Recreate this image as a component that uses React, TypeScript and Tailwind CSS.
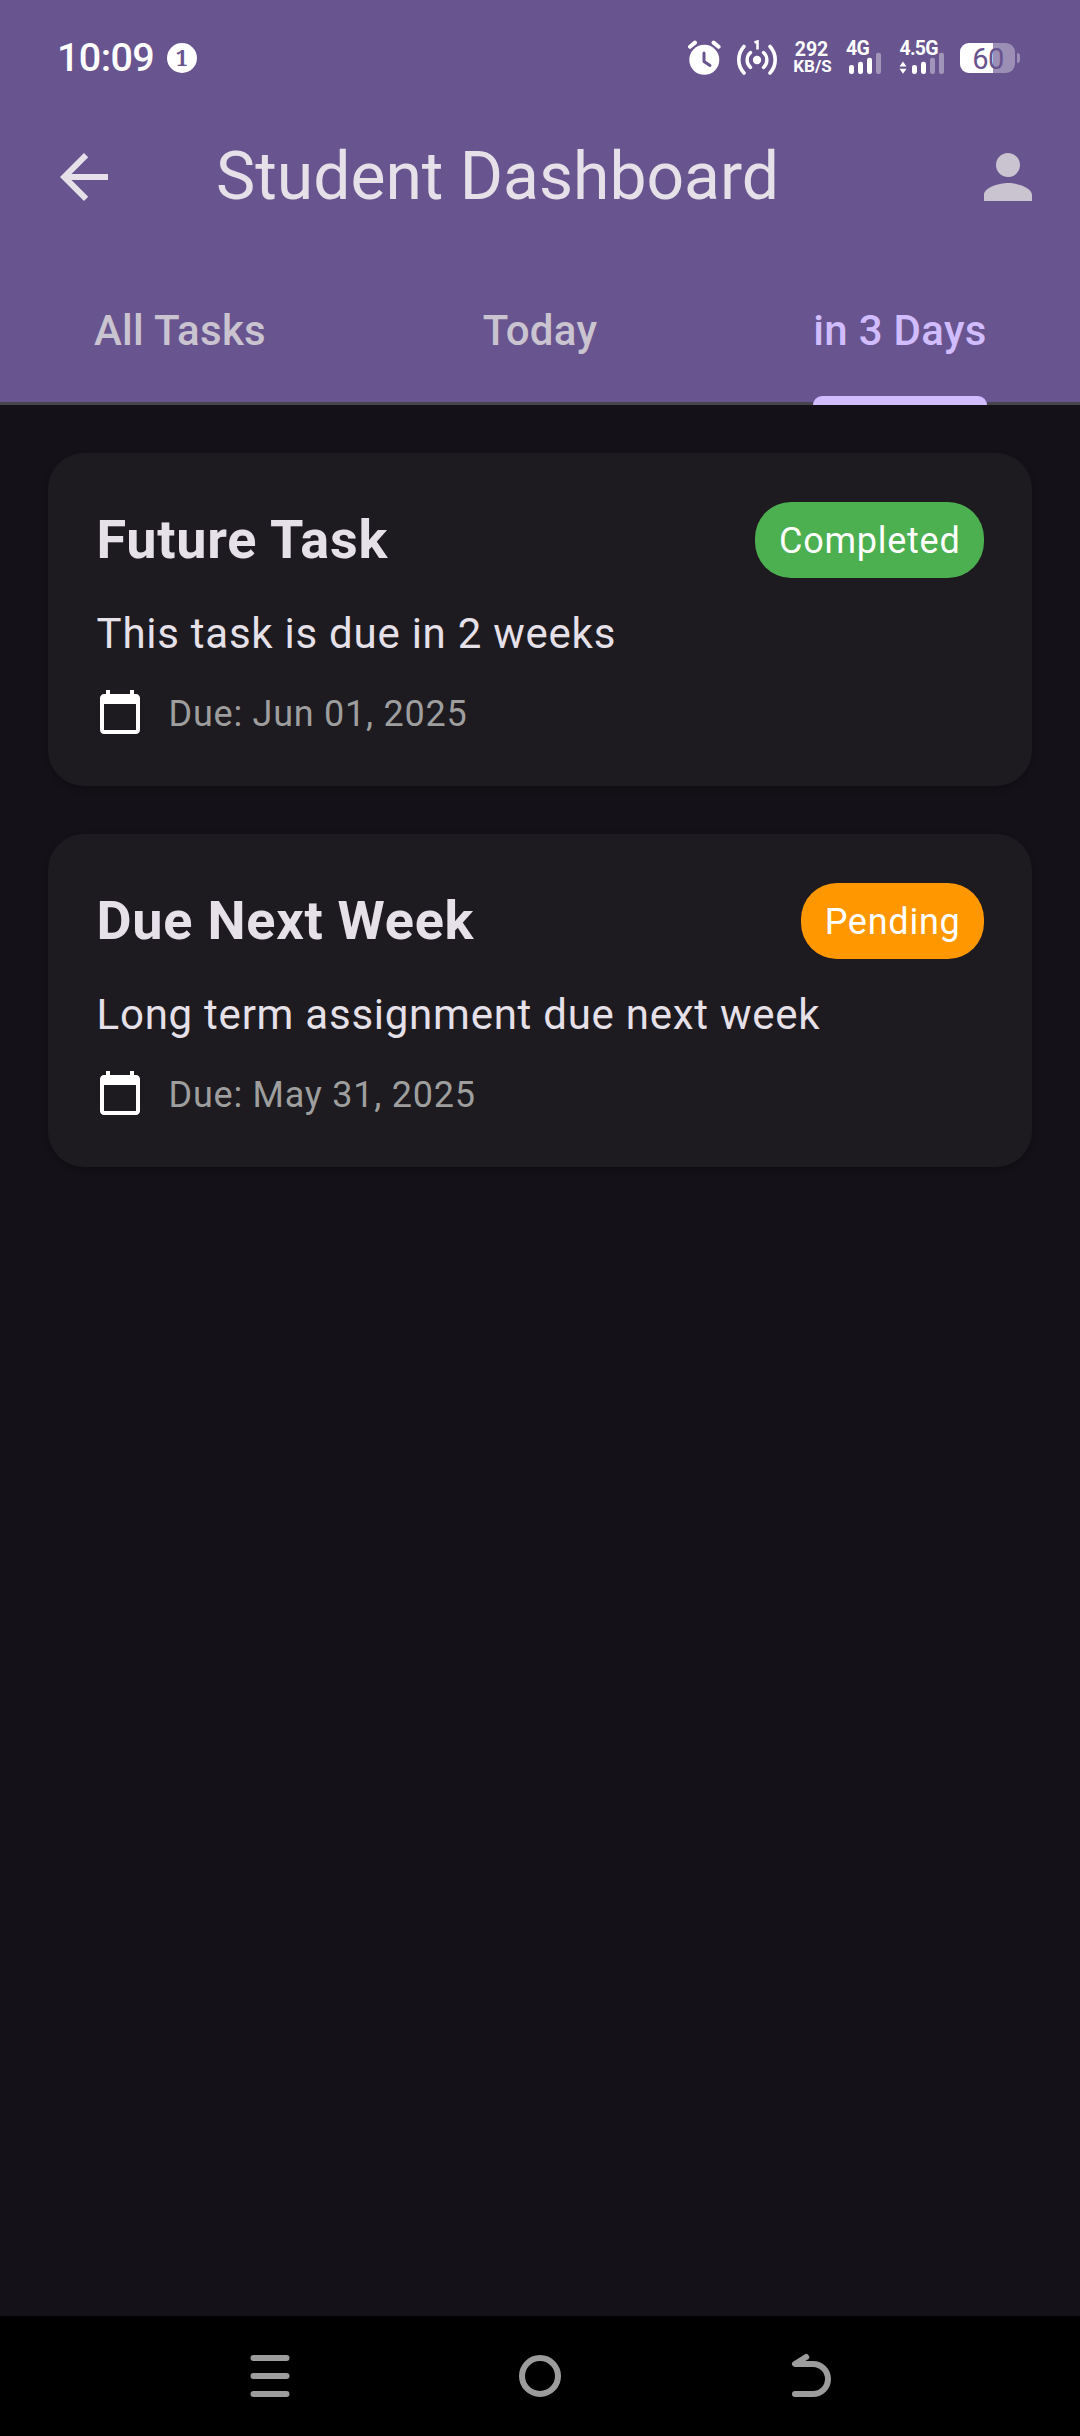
import React from "react";

const font = "font-['Roboto','Noto_Sans',sans-serif]";

function AlarmIcon() {
  return (
    <svg className="h-[36px] w-[34px]" viewBox="687 40 34 36">
      <circle cx="704.3" cy="59.8" r="15" fill="#fff" />
      <path d="M690 46.800l5-4.200M718.600 46.800l-5-4.200" stroke="#fff" strokeWidth="4" strokeLinecap="round" />
      <path d="M704 53v8.500l6 4" fill="none" stroke="#68548e" strokeWidth="3" strokeLinecap="round" strokeLinejoin="round" />
    </svg>
  );
}

function HotspotIcon() {
  return (
    <svg className="h-[36px] w-[42px]" viewBox="736 40 42 36" fill="none" stroke="#fff" strokeLinecap="round">
      <circle cx="757" cy="60" r="4.200" fill="#fff" stroke="none" />
      <path d="M750.500 52.500a10 10 0 0 0 0 15M763.500 52.500a10 10 0 0 1 0 15" strokeWidth="3.400" />
      <path d="M744 46.500a19.500 19.500 0 0 0 0 26.500M770 46.500a19.500 19.500 0 0 1 0 26.500" strokeWidth="3.600" />
      <path d="M754.500 42.500l3-1v8" strokeWidth="2.600" strokeLinecap="butt" />
    </svg>
  );
}

function SignalBars({ label, active, data }: { label: string; active: number; data?: boolean }) {
  const tops = [65, 61.7, 57.7, 52.7];
  return (
    <div className="relative h-[36px] w-[48px]">
      <svg className="h-[36px] w-[48px]" viewBox="898 40 48 36">
        {data && <path d="M899.500 66.500l3.500-5 3.500 5zM899.500 68.800l3.500 5 3.500-5z" fill="#fff" />}
        {tops.map((y, i) => (
          <rect key={y} x={912 + i * 9} y={y} width="5" height={74 - y} rx="2.200" fill="#fff" fillOpacity={i < active ? 1 : 0.38} />
        ))}
      </svg>
      <span className={"absolute top-[-3px] text-[19.500px] leading-[24px] font-bold tracking-[-0.800px] " + (data ? "left-[1.500px]" : "left-[11px]")}>{label}</span>
    </div>
  );
}

function Battery() {
  return (
    <div className="relative h-[30px] w-[60px]">
      <div className="flex h-[30px] w-[55px] overflow-hidden rounded-[9px] bg-white/35">
        <div className="w-[33px] bg-white" />
      </div>
      <div className="absolute top-[10px] right-0 h-[10px] w-[3px] rounded-r-[3px] bg-white/35" />
      <span className="absolute top-0 left-0 w-[56px] text-center text-[29px] leading-[32px] tracking-[-0.500px] text-[#68548e]">60</span>
    </div>
  );
}

function StatusBar() {
  return (
    <div className="flex h-[93px] items-start pt-[40px] pr-[60px] pl-[57px] text-white">
      <span className="text-[39.500px] leading-[36px] font-medium tracking-[-0.600px]">10:09</span>
      <span className="mt-[3px] ml-[12.500px] flex size-[30px] items-center justify-center rounded-full bg-white font-['Noto_Serif','Liberation_Serif',serif] text-[21.500px] leading-[30px] font-bold text-[#68548e]">1</span>
      <div className="ml-auto flex items-start">
        <AlarmIcon />
        <div className="ml-[15px] flex"><HotspotIcon /></div>
        <div className="ml-[15px] flex w-[39px] flex-col items-center font-bold">
          <span className="mt-[1px] pr-[2px] text-[19.500px] leading-[17px]">292</span>
          <span className="text-[17px] leading-[17px]">KB/S</span>
        </div>
        <div className="ml-[3px] flex"><SignalBars label="4G" active={3} /></div>
        <div className="ml-[15px] flex"><SignalBars label="4.5G" active={2} data /></div>
        <div className="mt-[3px] ml-[14px]"><Battery /></div>
      </div>
    </div>
  );
}

function Toolbar() {
  return (
    <div className="flex h-[168px] items-center pr-[36px] pl-[48px]">
      <svg className="size-[72px]" viewBox="0 0 24 24" fill="#e6e0e9">
        <path d="M20 11H7.830l5.590-5.590L12 4l-8 8 8 8 1.410-1.410L7.830 13H20v-2z" />
      </svg>
      <h1 className="ml-[96px] text-[66px] leading-[84px] font-normal text-[#e6e0e9]">Student Dashboard</h1>
      <svg className="ml-auto size-[72px]" viewBox="0 0 24 24" fill="#cac4d0">
        <path d="M12 12c2.210 0 4-1.790 4-4s-1.790-4-4-4-4 1.790-4 4 1.790 4 4 4zm0 2c-2.670 0-8 1.340-8 4v2h16v-2c0-2.660-5.330-4-8-4z" />
      </svg>
    </div>
  );
}

const tabs = ["All Tasks", "Today", "in 3 Days"];

function Tabs({ selected }: { selected: number }) {
  return (
    <div className="grid h-[144px] grid-cols-3 border-b-[3px] border-[#49454f]">
      {tabs.map((t, i) => (
        <div key={t} className="flex justify-center">
          <div className={"relative pt-[1px] text-[42px] leading-[138px] font-medium tracking-[0.300px] " + (i === selected ? "text-[#d0bcff]" : "text-[#cac4d0]")}>
            {t}
            {i === selected && <div className="absolute top-[135px] left-0 h-[9px] w-full rounded-t-[9px] bg-[#d0bcff]" />}
          </div>
        </div>
      ))}
    </div>
  );
}

type Task = { title: string; body: string; due: string; status: string; done: boolean };

const tasks: Task[] = [
  { title: "Future Task", body: "This task is due in 2 weeks", due: "Due: Jun 01, 2025", status: "Completed", done: true },
  { title: "Due Next Week", body: "Long term assignment due next week", due: "Due: May 31, 2025", status: "Pending", done: false },
];

function TaskCard({ task }: { task: Task }) {
  return (
    <article className="flex h-[333px] flex-col rounded-[36px] bg-[#1d1b20] p-[48px] tracking-[0.750px] shadow-[0_3px_6px_rgba(0,0,0,0.24)]">
      <div className="flex h-[77px] items-center justify-between">
        <h2 className="pl-[0.500px] text-[54px] leading-[77px] font-bold text-[#e6e0e9]">{task.title}</h2>
        <span className={"mt-[1px] rounded-[36px] pr-[23.500px] pl-[24px] pt-[14px] pb-[10px] text-[36px] leading-[51.400px] text-white " + (task.done ? "bg-[#4caf50]" : "bg-[#ff9800]")}>{task.status}</span>
      </div>
      <p className="mt-[26px] pl-[0.600px] text-[42px] leading-[60px] text-[#e6e0e9]">{task.body}</p>
      <div className="mt-[22px] flex h-[51px] items-center gap-[24px]">
        <svg className="size-[48px]" viewBox="0 0 24 24" fill="#fff">
          <path d="M20 3h-1V1h-2v2H7V1H5v2H4c-1.100 0-2 .9-2 2v16c0 1.100.9 2 2 2h16c1.100 0 2-.9 2-2V5c0-1.100-.9-2-2-2zm0 18H4V8h16v13z" />
        </svg>
        <span className="pt-[5px] pl-[0.600px] text-[36px] leading-[51px] text-[#9e9e9e]">{task.due}</span>
      </div>
    </article>
  );
}

function NavBar() {
  return (
    <nav className="flex h-[120px] items-center justify-between bg-black px-[249px]">
      <svg className="size-[42px]" viewBox="0 0 42 42" stroke="#9c9c9c" strokeWidth="6" strokeLinecap="round">
        <path d="M4.500 3h33M4.500 21h33M4.500 39h33" />
      </svg>
      <svg className="size-[42px]" viewBox="0 0 42 42" fill="none" stroke="#9c9c9c" strokeWidth="6">
        <circle cx="21" cy="21" r="18" />
      </svg>
      <svg className="size-[42px] overflow-visible" viewBox="0 0 42 42" fill="none" stroke="#9c9c9c" strokeWidth="6" strokeLinecap="round" strokeLinejoin="round">
        <path d="M17.200 2L6 9H24a15 15 0 0 1 0 30H6" />
      </svg>
    </nav>
  );
}

export default function App() {
  return (
    <div className={"flex h-[2436px] w-[1080px] flex-col bg-[#141218] " + font}>
      <header className="bg-[#68548e]">
        <StatusBar />
        <Toolbar />
        <Tabs selected={2} />
      </header>
      <main className="flex grow flex-col gap-[48px] p-[48px]">
        {tasks.map((t) => (
          <TaskCard key={t.title} task={t} />
        ))}
      </main>
      <NavBar />
    </div>
  );
}
